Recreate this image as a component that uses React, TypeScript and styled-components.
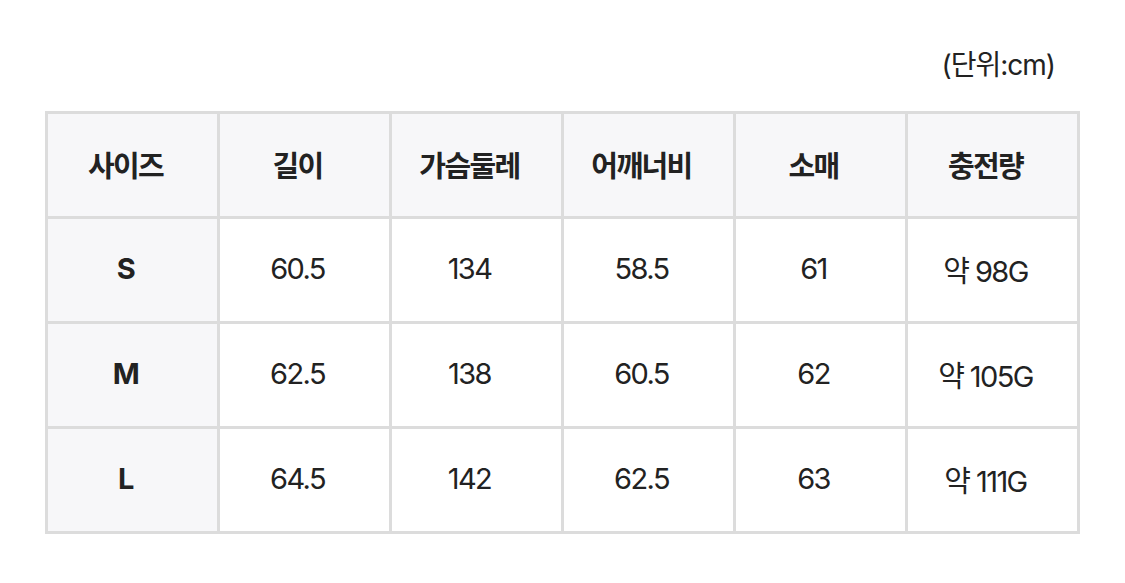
import React from "react";
import styled, { createGlobalStyle } from "styled-components";

const Global = createGlobalStyle`
  html, body { margin: 0; padding: 0; background: #ffffff; }
  body { font-family: Inter, "Noto Sans CJK KR", "Noto Sans", sans-serif; color: #222; }
`;

const Page = styled.div`
  width: 1125px;
  height: 583px;
  padding: 45px 0 0 45px;
  box-sizing: border-box;
  display: flex;
  flex-direction: column;
`;

const Unit = styled.div`
  width: 1010px;
  text-align: right;
  font-size: 28px;
  line-height: 40px;
  letter-spacing: -1px;
  color: #222;
  margin-bottom: 26px;
`;

const Table = styled.table`
  width: 1035px;
  border-collapse: collapse;
  table-layout: fixed;
  border: 3px solid #dcdcdc;
`;

const Cell = styled.td<{ $head?: boolean; $bold?: boolean }>`
  height: 99px;
  padding: 0 14px 3px 0;
  border: 3px solid #dcdcdc;
  text-align: center;
  vertical-align: middle;
  font-size: 29px;
  letter-spacing: -1.6px;
  color: #222;
  font-weight: ${(p) => (p.$bold ? 700 : 400)};
  background: ${(p) => (p.$head ? "#f7f7f9" : "#ffffff")};
`;

const headers = ["사이즈", "길이", "가슴둘레", "어깨너비", "소매", "충전량"];
const rows = [
  ["S", "60.5", "134", "58.5", "61", "약 98G"],
  ["M", "62.5", "138", "60.5", "62", "약 105G"],
  ["L", "64.5", "142", "62.5", "63", "약 111G"],
];

export default function App() {
  return (
    <>
      <Global />
      <Page>
        <Unit>(단위:cm)</Unit>
        <Table>
          <tbody>
            <tr>
              {headers.map((h) => (
                <Cell key={h} $head $bold>
                  {h}
                </Cell>
              ))}
            </tr>
            {rows.map((r) => (
              <tr key={r[0]}>
                {r.map((c, i) => (
                  <Cell key={i} $head={i === 0} $bold={i === 0}>
                    {c}
                  </Cell>
                ))}
              </tr>
            ))}
          </tbody>
        </Table>
      </Page>
    </>
  );
}
